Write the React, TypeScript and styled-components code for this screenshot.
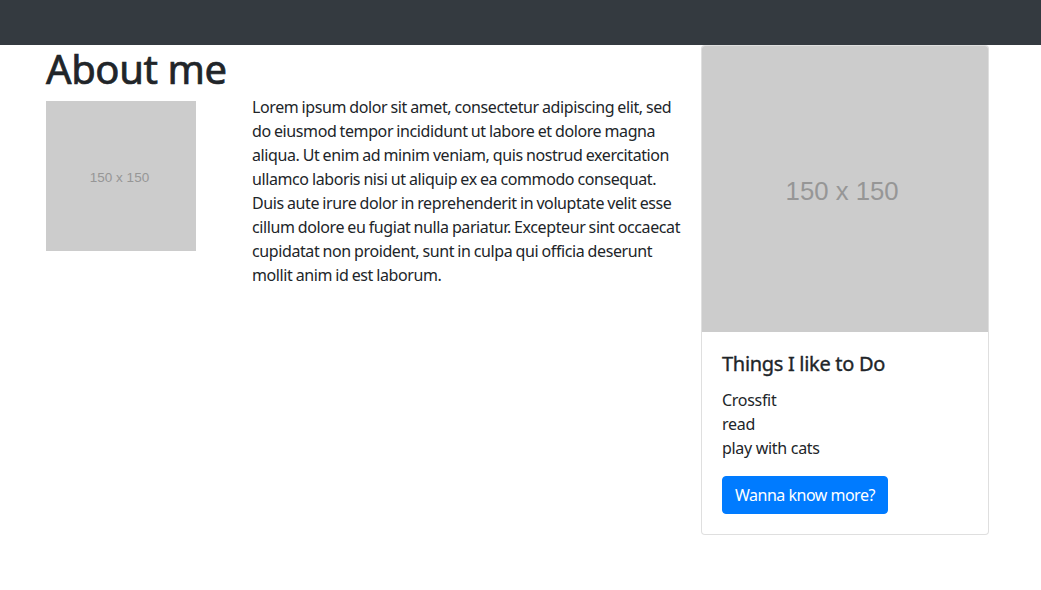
import React from "react";
import styled, { createGlobalStyle } from "styled-components";

const GlobalStyle = createGlobalStyle`
  * { box-sizing: border-box; }
  html, body { margin: 0; padding: 0; background: #fff; }
  body {
    font-family: "Noto Sans", "Open Sans", Arial, sans-serif;
    font-size: 16px;
    line-height: 1.5;
    color: #212529;
  }
`;

const Navbar = styled.nav`
  height: 45px;
  background: #343a40;
`;

const Main = styled.main`
  display: flex;
  align-items: flex-start;
  gap: 19px;
  padding: 0 52px 0 46px;
`;

const Content = styled.section`
  flex: 1;
  display: flex;
  align-items: flex-start;
  gap: 15px;
`;

const Intro = styled.div`
  width: 191px;
  flex-shrink: 0;
`;

const Title = styled.h1`
  margin: 0 0 8px;
  font-size: 40px;
  font-weight: 400;
  line-height: 48px;
  white-space: nowrap;
  letter-spacing: -0.4px;
  -webkit-text-stroke: 0.7px #212529;
`;

const Text = styled.p`
  flex: 1;
  margin: 50px 0 0;
  font-size: 16px;
  line-height: 24px;
  letter-spacing: -0.4px;
  word-spacing: -0.5px;
`;

const Line = styled.span`
  display: block;
  white-space: nowrap;
`;

const Card = styled.aside`
  width: 288px;
  flex-shrink: 0;
  border: 1px solid rgba(0, 0, 0, 0.125);
  border-radius: 4px;
  overflow: hidden;
  background: #fff;
`;

const PlaceholderSvg = styled.svg<{ $size: number }>`
  display: block;
  width: ${(p) => p.$size}px;
  height: ${(p) => p.$size}px;
`;

const CardBody = styled.div`
  padding: 20px;
`;

const CardTitle = styled.h5`
  margin: 0 0 12px;
  font-size: 20px;
  font-weight: 400;
  line-height: 24px;
  letter-spacing: -0.3px;
  -webkit-text-stroke: 0.35px #212529;
`;

const CardText = styled.p`
  margin: 0 0 16px;
  line-height: 24px;
  letter-spacing: -0.3px;
`;

const Button = styled.button`
  display: inline-block;
  height: 38px;
  padding: 0 12px;
  border: 1px solid #007bff;
  border-radius: 4px;
  background: #007bff;
  color: #fff;
  font-family: inherit;
  font-size: 16px;
  line-height: 24px;
  letter-spacing: -0.5px;
  cursor: pointer;
`;

function Placeholder({ size }: { size: number }) {
  return (
    <PlaceholderSvg $size={size} viewBox="0 0 150 150" preserveAspectRatio="none">
      <rect width="150" height="150" fill="#cccccc" />
      <text
        x="73.5"
        y="81"
        textAnchor="middle"
        fill="#969696"
        fontFamily="'Liberation Sans', Arial, sans-serif"
        fontSize="13.5"
      >
        150 x 150
      </text>
    </PlaceholderSvg>
  );
}

const lines = [
  "Lorem ipsum dolor sit amet, consectetur adipiscing elit, sed",
  "do eiusmod tempor incididunt ut labore et dolore magna",
  "aliqua. Ut enim ad minim veniam, quis nostrud exercitation",
  "ullamco laboris nisi ut aliquip ex ea commodo consequat.",
  "Duis aute irure dolor in reprehenderit in voluptate velit esse",
  "cillum dolore eu fugiat nulla pariatur. Excepteur sint occaecat",
  "cupidatat non proident, sunt in culpa qui officia deserunt",
  "mollit anim id est laborum.",
];

export default function App() {
  return (
    <>
      <GlobalStyle />
      <Navbar />
      <Main>
        <Content>
          <Intro>
            <Title>About me</Title>
            <Placeholder size={150} />
          </Intro>
          <Text>
            {lines.map((l) => (
              <Line key={l}>{l}</Line>
            ))}
          </Text>
        </Content>
        <Card>
          <Placeholder size={286} />
          <CardBody>
            <CardTitle>Things I like to Do</CardTitle>
            <CardText>
              Crossfit
              <br />
              read
              <br />
              play with cats
            </CardText>
            <Button>Wanna know more?</Button>
          </CardBody>
        </Card>
      </Main>
    </>
  );
}
